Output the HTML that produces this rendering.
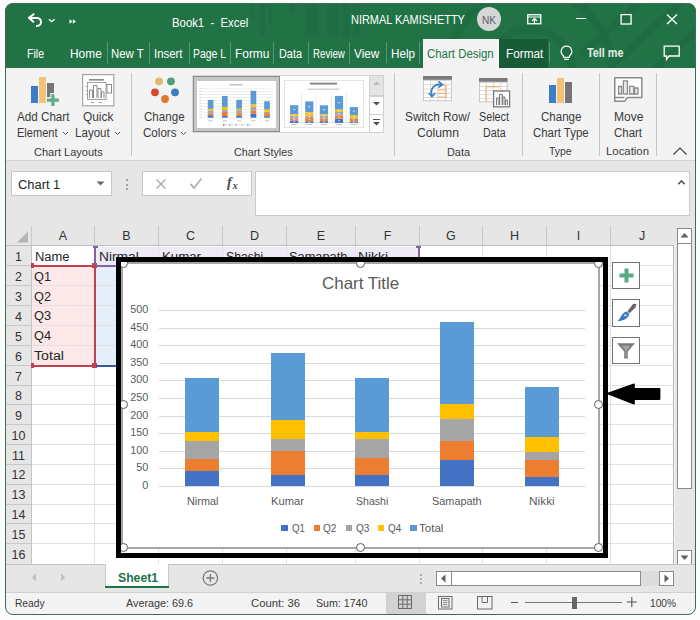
<!DOCTYPE html>
<html><head><meta charset="utf-8"><style>
html,body{margin:0;padding:0;}
body{width:700px;height:620px;position:relative;overflow:hidden;background:#fcfcfc;font-family:"Liberation Sans",sans-serif;}
.r{position:absolute;}
.t{position:absolute;white-space:nowrap;line-height:1;transform-origin:0 0;}
.win{position:absolute;left:5px;top:3px;width:691px;height:612px;border:1px solid #3e6c52;border-radius:8px;box-sizing:border-box;}
</style></head><body>
<div style="position:absolute;left:0;top:0;width:700px;height:620px;clip-path:inset(3px 4px 5px 5px round 8px);">
<div class="r" style="left:5px;top:3px;width:691px;height:612px;background:#f3f3f3;"></div>
<div class="r" style="left:5px;top:3px;width:691px;height:65px;background:#217346;border-radius:8px 8px 0 0;"></div>
<svg class="r" style="left:5px;top:3px;border-radius:8px 8px 0 0;" width="691" height="65" viewBox="0 0 691 65">
<g fill="none" stroke="#1f6c42" stroke-width="8">
<circle cx="525" cy="68" r="42"/>
<circle cx="525" cy="68" r="82"/>
</g>
<g stroke="#1f6c42" stroke-width="7">
<line x1="640" y1="-5" x2="575" y2="52"/><line x1="680" y1="-5" x2="610" y2="60"/>
<line x1="700" y1="20" x2="650" y2="66"/>
</g>
<g fill="#1f6d42"><rect x="246" y="0" width="3" height="17"/><rect x="255.6" y="0" width="4.4" height="32"/><rect x="263" y="0" width="4" height="20"/>
<path d="M283 0 H290 L288 12 Z"/><rect x="300" y="0" width="13" height="32"/><rect x="322" y="0" width="6" height="34"/><rect x="328.5" y="0" width="5" height="34"/>
<rect x="338" y="0" width="7" height="34"/><rect x="348" y="0" width="7" height="34"/></g>
</svg>
<svg class="r" style="left:26px;top:11px;" width="20" height="18" viewBox="0 0 20 18"><path d="M2.5 6.9 H11 A4 4 0 0 1 11 14.9 H10" fill="none" stroke="#fff" stroke-width="2"/><path d="M7.6 3.2 L3 6.9 L7.4 10.7" fill="none" stroke="#fff" stroke-width="2" stroke-linecap="round" stroke-linejoin="round"/></svg>
<svg class="r" style="left:48px;top:17px;" width="8" height="6" viewBox="0 0 8 6"><path d="M0.9 2.3 L3.7 4.6 L6.6 2.3" fill="none" stroke="#fff" stroke-width="1.3"/></svg>
<svg class="r" style="left:69px;top:18px;" width="8" height="7" viewBox="0 0 8 7"><path d="M0.5 1.2 L3.6 3.5 L0.5 5.8 Z M3.9 1.2 L7 3.5 L3.9 5.8 Z" fill="#fff"/></svg>
<div class="t" style="left:172.30px;top:16.00px;font-size:13px;color:#ffffff;font-weight:normal;transform:scaleX(0.8727);">Book1&nbsp; -&nbsp; Excel</div>
<div class="t" style="left:350.80px;top:13.00px;font-size:13px;color:#ffffff;font-weight:normal;transform:scaleX(0.8416);">NIRMAL KAMISHETTY</div>
<div class="r" style="left:476.5px;top:7px;width:24px;height:24px;border-radius:50%;background:#d6d6d6;"></div>
<div class="t" style="left:481.50px;top:15.00px;font-size:11px;color:#5a5a6a;font-weight:normal;transform:scaleX(0.9156);">NK</div>
<svg class="r" style="left:527px;top:14px;" width="15" height="11" viewBox="0 0 15 11"><rect x="0.75" y="0.75" width="13" height="9" fill="none" stroke="#fff" stroke-width="1.3"/><line x1="0.5" y1="3" x2="14" y2="3" stroke="#fff" stroke-width="1.2"/><path d="M5 7 L7.5 4.5 L10 7 M7.5 4.5 V10" fill="none" stroke="#fff" stroke-width="1.2"/></svg>
<div class="r" style="left:575.5px;top:18px;width:10.5px;height:1.2px;background:#fff;"></div>
<svg class="r" style="left:620px;top:13px;" width="13" height="13" viewBox="0 0 13 13"><rect x="1.1" y="1.6" width="10" height="9.4" fill="none" stroke="#fff" stroke-width="1.3"/></svg>
<svg class="r" style="left:666px;top:13px;" width="12" height="12" viewBox="0 0 12 12"><path d="M1 1.5 L11 11 M11 1.5 L1 11" stroke="#fff" stroke-width="1.3"/></svg>
<div class="t" style="left:26.70px;top:48.00px;font-size:12.5px;color:#ffffff;font-weight:normal;transform:scaleX(0.8447);">File</div>
<div class="t" style="left:70.00px;top:48.00px;font-size:12.5px;color:#ffffff;font-weight:normal;transform:scaleX(0.9528);">Home</div>
<div class="t" style="left:111.30px;top:48.00px;font-size:12.5px;color:#ffffff;font-weight:normal;transform:scaleX(0.9115);">New T</div>
<div class="t" style="left:154.30px;top:48.00px;font-size:12.5px;color:#ffffff;font-weight:normal;transform:scaleX(0.9088);">Insert</div>
<div class="t" style="left:193.00px;top:48.00px;font-size:12.5px;color:#ffffff;font-weight:normal;transform:scaleX(0.8328);">Page L</div>
<div class="t" style="left:235.00px;top:48.00px;font-size:12.5px;color:#ffffff;font-weight:normal;transform:scaleX(0.9522);">Formu</div>
<div class="t" style="left:279.00px;top:48.00px;font-size:12.5px;color:#ffffff;font-weight:normal;transform:scaleX(0.8700);">Data</div>
<div class="t" style="left:313.00px;top:48.00px;font-size:12.5px;color:#ffffff;font-weight:normal;transform:scaleX(0.7756);">Review</div>
<div class="t" style="left:354.40px;top:48.00px;font-size:12.5px;color:#ffffff;font-weight:normal;transform:scaleX(0.9451);">View</div>
<div class="t" style="left:391.00px;top:48.00px;font-size:12.5px;color:#ffffff;font-weight:normal;transform:scaleX(0.9343);">Help</div>
<div class="r" style="left:106.7px;top:42.4px;width:1px;height:21.4px;background:#4f9a6e;"></div>
<div class="r" style="left:148.6px;top:42.4px;width:1px;height:21.4px;background:#4f9a6e;"></div>
<div class="r" style="left:188.5px;top:42.4px;width:1px;height:21.4px;background:#4f9a6e;"></div>
<div class="r" style="left:230.4px;top:42.4px;width:1px;height:21.4px;background:#4f9a6e;"></div>
<div class="r" style="left:272.9px;top:42.4px;width:1px;height:21.4px;background:#4f9a6e;"></div>
<div class="r" style="left:308px;top:42.4px;width:1px;height:21.4px;background:#4f9a6e;"></div>
<div class="r" style="left:349.3px;top:42.4px;width:1px;height:21.4px;background:#4f9a6e;"></div>
<div class="r" style="left:386px;top:42.4px;width:1px;height:21.4px;background:#4f9a6e;"></div>
<div class="r" style="left:419px;top:42.4px;width:1px;height:21.4px;background:#4f9a6e;"></div>
<div class="r" style="left:423px;top:38.7px;width:76px;height:30px;background:#f3f3f3;"></div>
<div class="t" style="left:427.00px;top:48.00px;font-size:12.5px;color:#217346;font-weight:normal;transform:scaleX(0.9145);">Chart Design</div>
<div class="r" style="left:499px;top:38.7px;width:49px;height:29.3px;background:#185c37;"></div>
<div class="t" style="left:505.60px;top:48.00px;font-size:12.5px;color:#ffffff;font-weight:normal;transform:scaleX(0.9428);">Format</div>
<div class="r" style="left:548.5px;top:41.6px;width:1px;height:21.4px;background:#4f9a6e;"></div>
<svg class="r" style="left:559px;top:45px;" width="15" height="17" viewBox="0 0 15 17"><path d="M7.5 1.2 A5.2 5.2 0 0 0 4.2 10.5 L4.8 12.3 H10.2 L10.8 10.5 A5.2 5.2 0 0 0 7.5 1.2 Z" fill="none" stroke="#fff" stroke-width="1.2"/><line x1="5.2" y1="14.3" x2="9.8" y2="14.3" stroke="#fff" stroke-width="1.2"/></svg>
<div class="t" style="left:586.50px;top:47.00px;font-size:12.5px;color:#e4ece6;font-weight:bold;transform:scaleX(0.8665);">Tell me</div>
<svg class="r" style="left:663px;top:45px;" width="18" height="17" viewBox="0 0 18 17"><path d="M1.2 1.2 H16.2 V11 H6 L3.5 14.5 V11 H1.2 Z" fill="none" stroke="#fff" stroke-width="1.3"/></svg>
<div class="r" style="left:6px;top:68px;width:689px;height:92px;background:#f3f3f3;"></div>
<div class="r" style="left:6px;top:160px;width:689px;height:1px;background:#d4d4d4;"></div>
<div class="r" style="left:131px;top:72.5px;width:1px;height:83px;background:#c6c6c6;"></div>
<div class="r" style="left:394px;top:72.5px;width:1px;height:83px;background:#c6c6c6;"></div>
<div class="r" style="left:522px;top:72.5px;width:1px;height:83px;background:#c6c6c6;"></div>
<div class="r" style="left:599px;top:72.5px;width:1px;height:83px;background:#c6c6c6;"></div>
<div class="r" style="left:656px;top:72.5px;width:1px;height:83px;background:#c6c6c6;"></div>
<div class="r" style="left:31px;top:85.6px;width:6.5px;height:17.4px;background:#3d7cc9;"></div>
<div class="r" style="left:39px;top:77.3px;width:6.5px;height:25.7px;background:#f2c376;"></div>
<div class="r" style="left:47px;top:82.5px;width:6.6px;height:14px;background:#767676;"></div>
<svg class="r" style="left:45px;top:92px;" width="16" height="16" viewBox="0 0 16 16"><path d="M5.75 1.6 H10.05 V5.95 H14.4 V10.25 H10.05 V14.6 H5.75 V10.25 H1.4 V5.95 H5.75 Z" fill="#62aa8c" stroke="#f3f3f3" stroke-width="1.1"/></svg>
<div class="t" style="left:16.50px;top:111.00px;font-size:12px;color:#3a3a3a;font-weight:normal;transform:scaleX(0.9711);">Add Chart</div>
<div class="t" style="left:16.50px;top:127.00px;font-size:12px;color:#3a3a3a;font-weight:normal;transform:scaleX(0.9196);">Element</div>
<svg class="r" style="left:62px;top:131px;" width="7" height="5" viewBox="0 0 7 5"><path d="M1 1 L3.5 3.5 L6 1" fill="none" stroke="#555" stroke-width="1"/></svg>
<svg class="r" style="left:82px;top:74px;" width="33" height="33" viewBox="0 0 33 33"><rect x="0.6" y="0.6" width="31.2" height="31.2" fill="#fff" stroke="#a6a6a6" stroke-width="1.2"/>
<rect x="7" y="5" width="15" height="1.6" fill="#8a8a8a"/>
<rect x="5.5" y="8.5" width="18.5" height="17" fill="none" stroke="#a0a0a0" stroke-width="1"/>
<g fill="none" stroke="#8a8a8a" stroke-width="1"><path d="M7.5 24 V16 H10.5 V24"/><path d="M11.5 24 V11.5 H15 V24"/><path d="M16 24 V14.5 H19 V24"/><path d="M19.5 24 V18 H22 V24"/></g>
<rect x="25" y="10.5" width="4.5" height="8.5" fill="none" stroke="#8a8a8a" stroke-width="1"/>
<g fill="#a0a0a0"><rect x="3.5" y="12" width="1.3" height="0.9"/><rect x="3.5" y="16" width="1.3" height="0.9"/><rect x="3.5" y="20" width="1.3" height="0.9"/><rect x="9" y="28" width="3" height="1"/><rect x="17" y="28" width="3" height="1"/></g></svg>
<div class="t" style="left:82.60px;top:111.00px;font-size:12px;color:#3a3a3a;font-weight:normal;transform:scaleX(0.9896);">Quick</div>
<div class="t" style="left:75.20px;top:127.00px;font-size:12px;color:#3a3a3a;font-weight:normal;transform:scaleX(0.9651);">Layout</div>
<svg class="r" style="left:113.5px;top:131px;" width="7" height="5" viewBox="0 0 7 5"><path d="M1 1 L3.5 3.5 L6 1" fill="none" stroke="#555" stroke-width="1"/></svg>
<div class="t" style="left:34.30px;top:147.00px;font-size:11.5px;color:#3a3a3a;font-weight:normal;transform:scaleX(0.9597);">Chart Layouts</div>
<svg class="r" style="left:148px;top:73px;" width="34" height="32" viewBox="0 0 34 32"><circle cx="11" cy="8.3" r="3.9" fill="#e9b663"/><circle cx="23" cy="8.3" r="3.9" fill="#4e9e76"/><circle cx="7" cy="19.3" r="3.9" fill="#d44a2a"/><circle cx="27" cy="19.3" r="3.9" fill="#3a7dc4"/><circle cx="17" cy="26" r="3.9" fill="#e3782a"/></svg>
<div class="t" style="left:144.40px;top:111.00px;font-size:12px;color:#3a3a3a;font-weight:normal;transform:scaleX(0.9653);">Change</div>
<div class="t" style="left:142.50px;top:127.00px;font-size:12px;color:#3a3a3a;font-weight:normal;transform:scaleX(0.9660);">Colors</div>
<svg class="r" style="left:180px;top:131px;" width="7" height="5" viewBox="0 0 7 5"><path d="M1 1 L3.5 3.5 L6 1" fill="none" stroke="#555" stroke-width="1"/></svg>
<div class="r" style="left:191.6px;top:75px;width:178px;height:58.4px;background:#fff;border:1px solid #d8d8d8;box-sizing:border-box;"></div>
<div class="r" style="left:193px;top:76.4px;width:87px;height:55.3px;background:#c6c6c6;border:1.5px solid #8c8c8c;box-sizing:border-box;"></div>
<div class="r" style="left:197.3px;top:80.7px;width:78.6px;height:47.2px;background:#fff;"></div>
<svg class="r" style="left:197.3px;top:80.7px;" width="79" height="48" viewBox="0 0 79 48"><rect x="32.5" y="3.1" width="13" height="1.3" fill="#b8b8b8"/><rect x="6" y="7.60" width="70" height="0.55" fill="#e0e0e0"/><rect x="2.3" y="7.20" width="2.6" height="0.9" fill="#cfcfcf"/><rect x="6" y="10.51" width="70" height="0.55" fill="#e0e0e0"/><rect x="2.3" y="10.11" width="2.6" height="0.9" fill="#cfcfcf"/><rect x="6" y="13.42" width="70" height="0.55" fill="#e0e0e0"/><rect x="2.3" y="13.02" width="2.6" height="0.9" fill="#cfcfcf"/><rect x="6" y="16.33" width="70" height="0.55" fill="#e0e0e0"/><rect x="2.3" y="15.93" width="2.6" height="0.9" fill="#cfcfcf"/><rect x="6" y="19.24" width="70" height="0.55" fill="#e0e0e0"/><rect x="2.3" y="18.84" width="2.6" height="0.9" fill="#cfcfcf"/><rect x="6" y="22.15" width="70" height="0.55" fill="#e0e0e0"/><rect x="2.3" y="21.75" width="2.6" height="0.9" fill="#cfcfcf"/><rect x="6" y="25.06" width="70" height="0.55" fill="#e0e0e0"/><rect x="2.3" y="24.66" width="2.6" height="0.9" fill="#cfcfcf"/><rect x="6" y="27.97" width="70" height="0.55" fill="#e0e0e0"/><rect x="2.3" y="27.57" width="2.6" height="0.9" fill="#cfcfcf"/><rect x="6" y="30.88" width="70" height="0.55" fill="#e0e0e0"/><rect x="2.3" y="30.48" width="2.6" height="0.9" fill="#cfcfcf"/><rect x="6" y="33.79" width="70" height="0.55" fill="#e0e0e0"/><rect x="2.3" y="33.39" width="2.6" height="0.9" fill="#cfcfcf"/><rect x="6" y="36.70" width="70" height="0.55" fill="#e0e0e0"/><rect x="2.3" y="36.30" width="2.6" height="0.9" fill="#cfcfcf"/><rect x="10.75" y="34.26" width="5.7" height="2.44" fill="#4472c4"/><rect x="10.75" y="32.29" width="5.7" height="1.97" fill="#ed7d31"/><rect x="10.75" y="29.33" width="5.7" height="2.96" fill="#a5a5a5"/><rect x="10.75" y="27.82" width="5.7" height="1.51" fill="#ffc000"/><rect x="10.75" y="18.93" width="5.7" height="8.88" fill="#5b9bd5"/><rect x="11.40" y="39.3" width="4.4" height="0.9" fill="#c0c0c0"/><rect x="24.95" y="34.90" width="5.7" height="1.80" fill="#4472c4"/><rect x="24.95" y="30.95" width="5.7" height="3.95" fill="#ed7d31"/><rect x="24.95" y="28.98" width="5.7" height="1.97" fill="#a5a5a5"/><rect x="24.95" y="25.84" width="5.7" height="3.14" fill="#ffc000"/><rect x="24.95" y="14.93" width="5.7" height="10.92" fill="#5b9bd5"/><rect x="25.60" y="39.3" width="4.4" height="0.9" fill="#c0c0c0"/><rect x="39.25" y="34.90" width="5.7" height="1.80" fill="#4472c4"/><rect x="39.25" y="32.23" width="5.7" height="2.67" fill="#ed7d31"/><rect x="39.25" y="29.09" width="5.7" height="3.14" fill="#a5a5a5"/><rect x="39.25" y="27.82" width="5.7" height="1.28" fill="#ffc000"/><rect x="39.25" y="18.87" width="5.7" height="8.94" fill="#5b9bd5"/><rect x="39.90" y="39.3" width="4.4" height="0.9" fill="#c0c0c0"/><rect x="53.55" y="32.40" width="5.7" height="4.30" fill="#4472c4"/><rect x="53.55" y="29.38" width="5.7" height="3.02" fill="#ed7d31"/><rect x="53.55" y="25.73" width="5.7" height="3.66" fill="#a5a5a5"/><rect x="53.55" y="23.29" width="5.7" height="2.44" fill="#ffc000"/><rect x="53.55" y="9.76" width="5.7" height="13.53" fill="#5b9bd5"/><rect x="54.20" y="39.3" width="4.4" height="0.9" fill="#c0c0c0"/><rect x="67.15" y="35.13" width="5.7" height="1.57" fill="#4472c4"/><rect x="67.15" y="32.11" width="5.7" height="3.02" fill="#ed7d31"/><rect x="67.15" y="30.78" width="5.7" height="1.34" fill="#a5a5a5"/><rect x="67.15" y="28.40" width="5.7" height="2.38" fill="#ffc000"/><rect x="67.15" y="20.27" width="5.7" height="8.13" fill="#5b9bd5"/><rect x="67.80" y="39.3" width="4.4" height="0.9" fill="#c0c0c0"/><rect x="26.0" y="43.2" width="1.5" height="1.5" fill="#4472c4"/><rect x="28.0" y="43.5" width="2.5" height="0.9" fill="#d0d0d0"/><rect x="32.0" y="43.2" width="1.5" height="1.5" fill="#ed7d31"/><rect x="34.0" y="43.5" width="2.5" height="0.9" fill="#d0d0d0"/><rect x="38.0" y="43.2" width="1.5" height="1.5" fill="#a5a5a5"/><rect x="40.0" y="43.5" width="2.5" height="0.9" fill="#d0d0d0"/><rect x="44.0" y="43.2" width="1.5" height="1.5" fill="#ffc000"/><rect x="46.0" y="43.5" width="2.5" height="0.9" fill="#d0d0d0"/><rect x="50.0" y="43.2" width="1.5" height="1.5" fill="#5b9bd5"/><rect x="52.0" y="43.5" width="2.5" height="0.9" fill="#d0d0d0"/></svg>
<svg class="r" style="left:284.4px;top:80.3px;" width="80" height="48" viewBox="0 0 80 48"><rect x="0.5" y="0.5" width="79" height="47" fill="#fff" stroke="#e4e4e4" stroke-width="1"/><rect x="26" y="2.6" width="27" height="2" fill="#8a8a8a"/><rect x="24" y="8.6" width="31" height="1.2" fill="#c8c8c8"/><rect x="17.2" y="13" width="0.6" height="29.5" fill="#e0e0e0"/><rect x="31.8" y="13" width="0.6" height="29.5" fill="#e0e0e0"/><rect x="47.3" y="13" width="0.6" height="29.5" fill="#e0e0e0"/><rect x="61.9" y="13" width="0.6" height="29.5" fill="#e0e0e0"/><rect x="4" y="42.4" width="72" height="0.6" fill="#d0d0d0"/><rect x="6.10" y="40.56" width="8.2" height="2.44" fill="#4472c4"/><rect x="9.00" y="41.38" width="2.4" height="0.8" fill="#fff" opacity="0.8"/><rect x="6.10" y="38.58" width="8.2" height="1.98" fill="#ed7d31"/><rect x="9.00" y="39.17" width="2.4" height="0.8" fill="#fff" opacity="0.8"/><rect x="6.10" y="35.61" width="8.2" height="2.97" fill="#a5a5a5"/><rect x="9.00" y="36.70" width="2.4" height="0.8" fill="#fff" opacity="0.8"/><rect x="6.10" y="34.10" width="8.2" height="1.51" fill="#ffc000"/><rect x="9.00" y="34.46" width="2.4" height="0.8" fill="#fff" opacity="0.8"/><rect x="6.10" y="25.20" width="8.2" height="8.90" fill="#5b9bd5"/><rect x="9.00" y="29.25" width="2.4" height="0.8" fill="#fff" opacity="0.8"/><rect x="7.20" y="44" width="6" height="1" fill="#c0c0c0"/><rect x="21.20" y="41.21" width="8.2" height="1.79" fill="#4472c4"/><rect x="24.10" y="41.71" width="2.4" height="0.8" fill="#fff" opacity="0.8"/><rect x="21.20" y="37.30" width="8.2" height="3.92" fill="#ed7d31"/><rect x="24.10" y="38.86" width="2.4" height="0.8" fill="#fff" opacity="0.8"/><rect x="21.20" y="35.34" width="8.2" height="1.96" fill="#a5a5a5"/><rect x="24.10" y="35.92" width="2.4" height="0.8" fill="#fff" opacity="0.8"/><rect x="21.20" y="32.23" width="8.2" height="3.11" fill="#ffc000"/><rect x="24.10" y="33.38" width="2.4" height="0.8" fill="#fff" opacity="0.8"/><rect x="21.20" y="21.40" width="8.2" height="10.83" fill="#5b9bd5"/><rect x="24.10" y="26.41" width="2.4" height="0.8" fill="#fff" opacity="0.8"/><rect x="22.30" y="44" width="6" height="1" fill="#c0c0c0"/><rect x="35.80" y="41.21" width="8.2" height="1.79" fill="#4472c4"/><rect x="38.70" y="41.71" width="2.4" height="0.8" fill="#fff" opacity="0.8"/><rect x="35.80" y="38.56" width="8.2" height="2.65" fill="#ed7d31"/><rect x="38.70" y="39.49" width="2.4" height="0.8" fill="#fff" opacity="0.8"/><rect x="35.80" y="35.45" width="8.2" height="3.11" fill="#a5a5a5"/><rect x="38.70" y="36.60" width="2.4" height="0.8" fill="#fff" opacity="0.8"/><rect x="35.80" y="34.18" width="8.2" height="1.27" fill="#ffc000"/><rect x="38.70" y="34.41" width="2.4" height="0.8" fill="#fff" opacity="0.8"/><rect x="35.80" y="25.30" width="8.2" height="8.88" fill="#5b9bd5"/><rect x="38.70" y="29.34" width="2.4" height="0.8" fill="#fff" opacity="0.8"/><rect x="36.90" y="44" width="6" height="1" fill="#c0c0c0"/><rect x="50.90" y="38.68" width="8.2" height="4.32" fill="#4472c4"/><rect x="53.80" y="40.44" width="2.4" height="0.8" fill="#fff" opacity="0.8"/><rect x="50.90" y="35.64" width="8.2" height="3.04" fill="#ed7d31"/><rect x="53.80" y="36.76" width="2.4" height="0.8" fill="#fff" opacity="0.8"/><rect x="50.90" y="31.96" width="8.2" height="3.68" fill="#a5a5a5"/><rect x="53.80" y="33.40" width="2.4" height="0.8" fill="#fff" opacity="0.8"/><rect x="50.90" y="29.51" width="8.2" height="2.45" fill="#ffc000"/><rect x="53.80" y="30.33" width="2.4" height="0.8" fill="#fff" opacity="0.8"/><rect x="50.90" y="15.90" width="8.2" height="13.61" fill="#5b9bd5"/><rect x="53.80" y="22.30" width="2.4" height="0.8" fill="#fff" opacity="0.8"/><rect x="52.00" y="44" width="6" height="1" fill="#c0c0c0"/><rect x="65.80" y="41.48" width="8.2" height="1.52" fill="#4472c4"/><rect x="68.70" y="41.84" width="2.4" height="0.8" fill="#fff" opacity="0.8"/><rect x="65.80" y="38.56" width="8.2" height="2.92" fill="#ed7d31"/><rect x="68.70" y="39.62" width="2.4" height="0.8" fill="#fff" opacity="0.8"/><rect x="65.80" y="37.27" width="8.2" height="1.29" fill="#a5a5a5"/><rect x="68.70" y="37.52" width="2.4" height="0.8" fill="#fff" opacity="0.8"/><rect x="65.80" y="34.97" width="8.2" height="2.30" fill="#ffc000"/><rect x="68.70" y="35.72" width="2.4" height="0.8" fill="#fff" opacity="0.8"/><rect x="65.80" y="27.10" width="8.2" height="7.87" fill="#5b9bd5"/><rect x="68.70" y="30.63" width="2.4" height="0.8" fill="#fff" opacity="0.8"/><rect x="66.90" y="44" width="6" height="1" fill="#c0c0c0"/></svg>
<div class="r" style="left:369.3px;top:75px;width:14.5px;height:21px;background:#e4e4e4;border:1px solid #d0d0d0;box-sizing:border-box;"></div>
<div class="r" style="left:369.3px;top:95.5px;width:14.5px;height:19px;background:#fff;border:1px solid #d0d0d0;box-sizing:border-box;"></div>
<div class="r" style="left:369.3px;top:113.8px;width:14.5px;height:19.6px;background:#fff;border:1px solid #d0d0d0;box-sizing:border-box;"></div>
<svg class="r" style="left:372px;top:80px;" width="9" height="6" viewBox="0 0 9 6"><path d="M1 5 L4.5 1.5 L8 5 Z" fill="#b8b8b8"/></svg>
<svg class="r" style="left:372px;top:101px;" width="9" height="6" viewBox="0 0 9 6"><path d="M1 1 L4.5 4.5 L8 1 Z" fill="#505050"/></svg>
<svg class="r" style="left:372px;top:118px;" width="9" height="10" viewBox="0 0 9 10"><rect x="1" y="1" width="7" height="1" fill="#505050"/><path d="M1 4 L4.5 7.5 L8 4 Z" fill="#505050"/></svg>
<div class="t" style="left:233.50px;top:147.00px;font-size:11.5px;color:#3a3a3a;font-weight:normal;transform:scaleX(0.9342);">Chart Styles</div>
<svg class="r" style="left:422.6px;top:76.4px;" width="29" height="26" viewBox="0 0 29 26"><rect x="0" y="0" width="29" height="4.2" fill="#7a7a7a"/><rect x="0.5" y="4.2" width="28" height="20.5" fill="#fff" stroke="#c8c8c8" stroke-width="1"/><rect x="0" y="8.40" width="29" height="0.8" fill="#d0d0d0"/><rect x="0" y="12.60" width="29" height="0.8" fill="#d0d0d0"/><rect x="0" y="16.80" width="29" height="0.8" fill="#d0d0d0"/><rect x="0" y="21.00" width="29" height="0.8" fill="#d0d0d0"/><rect x="7.25" y="4.2" width="0.8" height="21.0" fill="#d0d0d0"/><rect x="14.50" y="4.2" width="0.8" height="21.0" fill="#d0d0d0"/><rect x="21.75" y="4.2" width="0.8" height="21.0" fill="#d0d0d0"/><path d="M14.5 9 H23 V21 H14.5" fill="none" stroke="#f0b070" stroke-width="1.2"/><path d="M14.5 14 H23 M14.5 17.5 H23" stroke="#f0b070" stroke-width="1"/><path d="M9 19.5 A8 8 0 0 1 18 8.5" fill="none" stroke="#3b7fc4" stroke-width="1.8"/><path d="M15.5 5.5 L19.5 8.5 L15.5 11.5" fill="none" stroke="#3b7fc4" stroke-width="1.6"/><path d="M5.8 17 L9 20.5 L12.2 17" fill="none" stroke="#3b7fc4" stroke-width="1.6"/></svg>
<div class="t" style="left:405.00px;top:111.00px;font-size:12px;color:#3a3a3a;font-weight:normal;transform:scaleX(0.9840);">Switch Row/</div>
<div class="t" style="left:417.00px;top:127.00px;font-size:12px;color:#3a3a3a;font-weight:normal;transform:scaleX(1.0160);">Column</div>
<svg class="r" style="left:479.3px;top:77.5px;" width="32" height="30" viewBox="0 0 32 30"><rect x="0" y="0" width="28.6" height="4.2" fill="#7a7a7a"/><rect x="0.5" y="4.2" width="27.6" height="19.6" fill="#fff" stroke="#c8c8c8" stroke-width="1"/><rect x="0" y="8.22" width="28.6" height="0.8" fill="#d0d0d0"/><rect x="0" y="12.24" width="28.6" height="0.8" fill="#d0d0d0"/><rect x="0" y="16.26" width="28.6" height="0.8" fill="#d0d0d0"/><rect x="0" y="20.28" width="28.6" height="0.8" fill="#d0d0d0"/><rect x="7.15" y="4.2" width="0.8" height="20.1" fill="#d0d0d0"/><rect x="14.30" y="4.2" width="0.8" height="20.1" fill="#d0d0d0"/><rect x="21.45" y="4.2" width="0.8" height="20.1" fill="#d0d0d0"/><path d="M7 8.6 V24 M7 8.6 H21" stroke="#f0b070" stroke-width="1.1" fill="none"/><rect x="14.6" y="13" width="16" height="15.8" fill="#fff" stroke="#7a7a7a" stroke-width="1.3"/><g fill="#e8e8e8" stroke="#7a7a7a" stroke-width="1"><path d="M17.5 27 V20 H20 V27"/><path d="M20.5 27 V16.5 H23.3 V27"/><path d="M23.8 27 V19 H26 V27"/><path d="M26.5 27 V22 H28.5 V27"/></g></svg>
<div class="t" style="left:478.60px;top:111.00px;font-size:12px;color:#3a3a3a;font-weight:normal;transform:scaleX(0.8993);">Select</div>
<div class="t" style="left:483.00px;top:127.00px;font-size:12px;color:#3a3a3a;font-weight:normal;transform:scaleX(0.8905);">Data</div>
<div class="t" style="left:447.00px;top:147.00px;font-size:11.5px;color:#3a3a3a;font-weight:normal;transform:scaleX(0.9456);">Data</div>
<div class="r" style="left:549.1px;top:85.4px;width:6.6px;height:17.3px;background:#3d7cc9;"></div>
<div class="r" style="left:557px;top:77.5px;width:6.9px;height:25.2px;background:#f2c376;"></div>
<div class="r" style="left:565.2px;top:82.2px;width:6.7px;height:20.5px;background:#767676;"></div>
<div class="t" style="left:541.30px;top:111.00px;font-size:12px;color:#3a3a3a;font-weight:normal;transform:scaleX(0.9605);">Change</div>
<div class="t" style="left:533.40px;top:127.00px;font-size:12px;color:#3a3a3a;font-weight:normal;transform:scaleX(0.9504);">Chart Type</div>
<div class="t" style="left:548.80px;top:146.00px;font-size:11.5px;color:#3a3a3a;font-weight:normal;transform:scaleX(0.9056);">Type</div>
<svg class="r" style="left:614.2px;top:77px;" width="30" height="26" viewBox="0 0 30 26"><path d="M0.75 0.75 H27.8 V20.6 H13.2 L10.9 24.2 H0.75 Z M0.75 20.6 H10.5" fill="#fff" stroke="#8a8a8a" stroke-width="1.5" stroke-linejoin="round"/><g fill="#ececec" stroke="#8a8a8a" stroke-width="1.3"><path d="M4.6 17 V9.5 H7.6 V17 Z"/><path d="M9.4 17 V3.8 H13.4 V17 Z"/><path d="M15.6 17 V9.3 H19.8 V17 Z"/><path d="M20.6 17 V11 H24 V17 Z"/></g></svg>
<div class="t" style="left:613.90px;top:111.00px;font-size:12px;color:#3a3a3a;font-weight:normal;transform:scaleX(1.0055);">Move</div>
<div class="t" style="left:614.00px;top:127.00px;font-size:12px;color:#3a3a3a;font-weight:normal;transform:scaleX(0.9543);">Chart</div>
<div class="t" style="left:605.60px;top:146.00px;font-size:11.5px;color:#3a3a3a;font-weight:normal;transform:scaleX(0.9892);">Location</div>
<svg class="r" style="left:672px;top:146px;" width="16" height="10" viewBox="0 0 16 10"><path d="M1.5 8.5 L8 2 L14.5 8.5" fill="none" stroke="#444" stroke-width="1.2"/></svg>
<div class="r" style="left:6px;top:161px;width:689px;height:85px;background:#e6e6e6;"></div>
<div class="r" style="left:11px;top:171px;width:101px;height:25px;background:#fff;border:1px solid #c6c6c6;box-sizing:border-box;"></div>
<div class="t" style="left:18.00px;top:178.00px;font-size:13px;color:#262626;font-weight:normal;transform:scaleX(0.9920);">Chart 1</div>
<svg class="r" style="left:96px;top:181px;" width="9" height="5" viewBox="0 0 9 5"><path d="M0.5 0.5 H8.5 L4.5 4.5 Z" fill="#666"/></svg>
<div class="r" style="left:126px;top:179.3px;width:2px;height:2px;background:#8a8a8a;border-radius:50%;"></div>
<div class="r" style="left:126px;top:183.5px;width:2px;height:2px;background:#8a8a8a;border-radius:50%;"></div>
<div class="r" style="left:126px;top:187.7px;width:2px;height:2px;background:#8a8a8a;border-radius:50%;"></div>
<div class="r" style="left:142px;top:171px;width:110px;height:25px;background:#fff;border:1px solid #c6c6c6;box-sizing:border-box;"></div>
<svg class="r" style="left:155px;top:178px;" width="12" height="12" viewBox="0 0 12 12"><path d="M1.5 1.5 L10.5 10.5 M10.5 1.5 L1.5 10.5" stroke="#b0b0b0" stroke-width="1.5"/></svg>
<svg class="r" style="left:189px;top:177px;" width="14" height="13" viewBox="0 0 14 13"><path d="M1.5 7 L5 11 L12.5 1.5" fill="none" stroke="#b4b4b4" stroke-width="1.9"/></svg>
<div class="t" style="left:227px;top:176px;font-size:14px;color:#4a4a4a;font-family:'Liberation Serif',serif;font-style:italic;font-weight:bold;">f</div>
<div class="t" style="left:232.5px;top:181px;font-size:10.5px;color:#4a4a4a;font-family:'Liberation Serif',serif;font-style:italic;font-weight:bold;">x</div>
<div class="r" style="left:255px;top:171px;width:435px;height:45px;background:#fff;border:1px solid #cacaca;box-sizing:border-box;"></div>
<svg class="r" style="left:677px;top:179px;" width="9" height="7" viewBox="0 0 9 7"><path d="M1.2 5.3 L4.5 2 L7.8 5.3" fill="none" stroke="#555" stroke-width="1.6"/></svg>
<div class="r" style="left:6px;top:245px;width:668px;height:319.5px;background:#fff;"></div>
<div class="r" style="left:6px;top:245.7px;width:25px;height:318.5px;background:#e6e6e6;"></div>
<div class="r" style="left:31px;top:226px;width:1px;height:19.7px;background:#c8c8c8;"></div>
<div class="r" style="left:94px;top:226px;width:1px;height:19.7px;background:#c8c8c8;"></div>
<div class="r" style="left:158px;top:226px;width:1px;height:19.7px;background:#c8c8c8;"></div>
<div class="r" style="left:222px;top:226px;width:1px;height:19.7px;background:#c8c8c8;"></div>
<div class="r" style="left:286px;top:226px;width:1px;height:19.7px;background:#c8c8c8;"></div>
<div class="r" style="left:355px;top:226px;width:1px;height:19.7px;background:#c8c8c8;"></div>
<div class="r" style="left:419px;top:226px;width:1px;height:19.7px;background:#c8c8c8;"></div>
<div class="r" style="left:482px;top:226px;width:1px;height:19.7px;background:#c8c8c8;"></div>
<div class="r" style="left:546px;top:226px;width:1px;height:19.7px;background:#c8c8c8;"></div>
<div class="r" style="left:610px;top:226px;width:1px;height:19.7px;background:#c8c8c8;"></div>
<div class="r" style="left:6px;top:245px;width:668px;height:1.2px;background:#bdbdbd;"></div>
<svg class="r" style="left:16px;top:231px;" width="13" height="12" viewBox="0 0 13 12"><path d="M12 0.5 V11.5 H1 Z" fill="#b4b4b4"/></svg>
<div class="t" style="left:58.81px;top:230.00px;font-size:12.5px;color:#333333;font-weight:normal;">A</div>
<div class="t" style="left:122.34px;top:230.00px;font-size:12.5px;color:#333333;font-weight:normal;">B</div>
<div class="t" style="left:186.00px;top:230.00px;font-size:12.5px;color:#333333;font-weight:normal;">C</div>
<div class="t" style="left:250.00px;top:230.00px;font-size:12.5px;color:#333333;font-weight:normal;">D</div>
<div class="t" style="left:316.84px;top:230.00px;font-size:12.5px;color:#333333;font-weight:normal;">E</div>
<div class="t" style="left:383.69px;top:230.00px;font-size:12.5px;color:#333333;font-weight:normal;">F</div>
<div class="t" style="left:446.12px;top:230.00px;font-size:12.5px;color:#333333;font-weight:normal;">G</div>
<div class="t" style="left:510.00px;top:230.00px;font-size:12.5px;color:#333333;font-weight:normal;">H</div>
<div class="t" style="left:576.75px;top:230.00px;font-size:12.5px;color:#333333;font-weight:normal;">I</div>
<div class="t" style="left:638.88px;top:230.00px;font-size:12.5px;color:#333333;font-weight:normal;">J</div>
<div class="r" style="left:31px;top:265.3px;width:643px;height:1px;background:#e1e1e1;"></div>
<div class="r" style="left:6px;top:265.3px;width:25px;height:1px;background:#c8c8c8;"></div>
<div class="r" style="left:31px;top:285.0px;width:643px;height:1px;background:#e1e1e1;"></div>
<div class="r" style="left:6px;top:285.0px;width:25px;height:1px;background:#c8c8c8;"></div>
<div class="r" style="left:31px;top:304.8px;width:643px;height:1px;background:#e1e1e1;"></div>
<div class="r" style="left:6px;top:304.8px;width:25px;height:1px;background:#c8c8c8;"></div>
<div class="r" style="left:31px;top:324.9px;width:643px;height:1px;background:#e1e1e1;"></div>
<div class="r" style="left:6px;top:324.9px;width:25px;height:1px;background:#c8c8c8;"></div>
<div class="r" style="left:31px;top:344.9px;width:643px;height:1px;background:#e1e1e1;"></div>
<div class="r" style="left:6px;top:344.9px;width:25px;height:1px;background:#c8c8c8;"></div>
<div class="r" style="left:31px;top:364.8px;width:643px;height:1px;background:#e1e1e1;"></div>
<div class="r" style="left:6px;top:364.8px;width:25px;height:1px;background:#c8c8c8;"></div>
<div class="r" style="left:31px;top:384.5px;width:643px;height:1px;background:#e1e1e1;"></div>
<div class="r" style="left:6px;top:384.5px;width:25px;height:1px;background:#c8c8c8;"></div>
<div class="r" style="left:31px;top:404.0px;width:643px;height:1px;background:#e1e1e1;"></div>
<div class="r" style="left:6px;top:404.0px;width:25px;height:1px;background:#c8c8c8;"></div>
<div class="r" style="left:31px;top:423.9px;width:643px;height:1px;background:#e1e1e1;"></div>
<div class="r" style="left:6px;top:423.9px;width:25px;height:1px;background:#c8c8c8;"></div>
<div class="r" style="left:31px;top:443.8px;width:643px;height:1px;background:#e1e1e1;"></div>
<div class="r" style="left:6px;top:443.8px;width:25px;height:1px;background:#c8c8c8;"></div>
<div class="r" style="left:31px;top:463.5px;width:643px;height:1px;background:#e1e1e1;"></div>
<div class="r" style="left:6px;top:463.5px;width:25px;height:1px;background:#c8c8c8;"></div>
<div class="r" style="left:31px;top:483.5px;width:643px;height:1px;background:#e1e1e1;"></div>
<div class="r" style="left:6px;top:483.5px;width:25px;height:1px;background:#c8c8c8;"></div>
<div class="r" style="left:31px;top:503.5px;width:643px;height:1px;background:#e1e1e1;"></div>
<div class="r" style="left:6px;top:503.5px;width:25px;height:1px;background:#c8c8c8;"></div>
<div class="r" style="left:31px;top:523.3px;width:643px;height:1px;background:#e1e1e1;"></div>
<div class="r" style="left:6px;top:523.3px;width:25px;height:1px;background:#c8c8c8;"></div>
<div class="r" style="left:31px;top:543.0px;width:643px;height:1px;background:#e1e1e1;"></div>
<div class="r" style="left:6px;top:543.0px;width:25px;height:1px;background:#c8c8c8;"></div>
<div class="r" style="left:94px;top:246px;width:1px;height:318px;background:#e1e1e1;"></div>
<div class="r" style="left:158px;top:246px;width:1px;height:318px;background:#e1e1e1;"></div>
<div class="r" style="left:222px;top:246px;width:1px;height:318px;background:#e1e1e1;"></div>
<div class="r" style="left:286px;top:246px;width:1px;height:318px;background:#e1e1e1;"></div>
<div class="r" style="left:355px;top:246px;width:1px;height:318px;background:#e1e1e1;"></div>
<div class="r" style="left:419px;top:246px;width:1px;height:318px;background:#e1e1e1;"></div>
<div class="r" style="left:482px;top:246px;width:1px;height:318px;background:#e1e1e1;"></div>
<div class="r" style="left:546px;top:246px;width:1px;height:318px;background:#e1e1e1;"></div>
<div class="r" style="left:610px;top:246px;width:1px;height:318px;background:#e1e1e1;"></div>
<div class="r" style="left:673px;top:246px;width:1px;height:318px;background:#e1e1e1;"></div>
<div class="r" style="left:31px;top:245.7px;width:1px;height:318.5px;background:#c4c4c4;"></div>
<div class="r" style="left:673.3px;top:245px;width:1px;height:319px;background:#b8b8b8;"></div>
<div class="t" style="left:15.03px;top:251.00px;font-size:12.5px;color:#333333;font-weight:normal;">1</div>
<div class="t" style="left:15.03px;top:271.00px;font-size:12.5px;color:#333333;font-weight:normal;">2</div>
<div class="t" style="left:15.03px;top:291.00px;font-size:12.5px;color:#333333;font-weight:normal;">3</div>
<div class="t" style="left:15.03px;top:311.00px;font-size:12.5px;color:#333333;font-weight:normal;">4</div>
<div class="t" style="left:15.03px;top:331.00px;font-size:12.5px;color:#333333;font-weight:normal;">5</div>
<div class="t" style="left:15.03px;top:351.00px;font-size:12.5px;color:#333333;font-weight:normal;">6</div>
<div class="t" style="left:15.03px;top:371.00px;font-size:12.5px;color:#333333;font-weight:normal;">7</div>
<div class="t" style="left:15.03px;top:390.00px;font-size:12.5px;color:#333333;font-weight:normal;">8</div>
<div class="t" style="left:15.03px;top:410.00px;font-size:12.5px;color:#333333;font-weight:normal;">9</div>
<div class="t" style="left:11.56px;top:430.00px;font-size:12.5px;color:#333333;font-weight:normal;">10</div>
<div class="t" style="left:12.00px;top:450.00px;font-size:12.5px;color:#333333;font-weight:normal;">11</div>
<div class="t" style="left:11.56px;top:469.00px;font-size:12.5px;color:#333333;font-weight:normal;">12</div>
<div class="t" style="left:11.56px;top:489.00px;font-size:12.5px;color:#333333;font-weight:normal;">13</div>
<div class="t" style="left:11.56px;top:509.00px;font-size:12.5px;color:#333333;font-weight:normal;">14</div>
<div class="t" style="left:11.56px;top:529.00px;font-size:12.5px;color:#333333;font-weight:normal;">15</div>
<div class="t" style="left:11.56px;top:549.00px;font-size:12.5px;color:#333333;font-weight:normal;">16</div>
<div class="r" style="left:32px;top:266px;width:63px;height:99.5px;background:#fce8e8;"></div>
<div class="r" style="left:96px;top:246.5px;width:323px;height:19.5px;background:#efebf6;"></div>
<div class="r" style="left:96px;top:266px;width:323px;height:99.5px;background:#e6eef9;"></div>
<div class="r" style="left:31px;top:285.0px;width:388px;height:1px;background:#d8d8e0;opacity:0.6;"></div>
<div class="r" style="left:31px;top:304.8px;width:388px;height:1px;background:#d8d8e0;opacity:0.6;"></div>
<div class="r" style="left:31px;top:324.9px;width:388px;height:1px;background:#d8d8e0;opacity:0.6;"></div>
<div class="r" style="left:31px;top:344.9px;width:388px;height:1px;background:#d8d8e0;opacity:0.6;"></div>
<div class="r" style="left:158px;top:246px;width:1px;height:119.5px;background:#d8d8e0;opacity:0.6;"></div>
<div class="r" style="left:222px;top:246px;width:1px;height:119.5px;background:#d8d8e0;opacity:0.6;"></div>
<div class="r" style="left:286px;top:246px;width:1px;height:119.5px;background:#d8d8e0;opacity:0.6;"></div>
<div class="r" style="left:355px;top:246px;width:1px;height:119.5px;background:#d8d8e0;opacity:0.6;"></div>
<div class="t" style="left:34.70px;top:251.00px;font-size:12.5px;color:#262626;font-weight:normal;transform:scaleX(1.0367);">Name</div>
<div class="t" style="left:34.20px;top:271.00px;font-size:12.5px;color:#262626;font-weight:normal;transform:scaleX(1.0200);">Q1</div>
<div class="t" style="left:34.20px;top:291.00px;font-size:12.5px;color:#262626;font-weight:normal;transform:scaleX(1.0200);">Q2</div>
<div class="t" style="left:34.20px;top:310.00px;font-size:12.5px;color:#262626;font-weight:normal;transform:scaleX(1.0200);">Q3</div>
<div class="t" style="left:34.20px;top:330.00px;font-size:12.5px;color:#262626;font-weight:normal;transform:scaleX(1.0200);">Q4</div>
<div class="t" style="left:34.20px;top:350.00px;font-size:12.5px;color:#262626;font-weight:normal;transform:scaleX(1.1374);">Total</div>
<div class="t" style="left:98.70px;top:251.00px;font-size:12.5px;color:#262626;font-weight:normal;transform:scaleX(1.1017);">Nirmal</div>
<div class="t" style="left:162.00px;top:251.00px;font-size:12.5px;color:#262626;font-weight:normal;transform:scaleX(1.0594);">Kumar</div>
<div class="t" style="left:225.70px;top:251.00px;font-size:12.5px;color:#262626;font-weight:normal;transform:scaleX(0.9752);">Shashi</div>
<div class="t" style="left:288.60px;top:251.00px;font-size:12.5px;color:#262626;font-weight:normal;transform:scaleX(1.0246);">Samapath</div>
<div class="t" style="left:358.00px;top:251.00px;font-size:12.5px;color:#262626;font-weight:normal;transform:scaleX(1.1085);">Nikki</div>
<div class="r" style="left:94.3px;top:264.8px;width:2px;height:101px;background:#c0424e;"></div>
<div class="r" style="left:32px;top:264.8px;width:63px;height:2px;background:#c0424e;"></div>
<div class="r" style="left:32px;top:364.8px;width:63px;height:2px;background:#c0424e;"></div>
<div class="r" style="left:92.1px;top:263px;width:5.2px;height:5px;background:#c0424e;"></div>
<div class="r" style="left:92.1px;top:363px;width:5.2px;height:5px;background:#c0424e;"></div>
<div class="r" style="left:31px;top:263px;width:2.5px;height:5px;background:#c0424e;"></div>
<div class="r" style="left:31px;top:363px;width:2.5px;height:5px;background:#c0424e;"></div>
<div class="r" style="left:96px;top:264.8px;width:323px;height:2px;background:#8064a2;"></div>
<div class="r" style="left:94.3px;top:246px;width:2px;height:19px;background:#8064a2;"></div>
<div class="r" style="left:417.5px;top:246px;width:2px;height:20px;background:#8064a2;"></div>
<div class="r" style="left:93px;top:245.5px;width:5px;height:2.5px;background:#8064a2;"></div>
<div class="r" style="left:416px;top:245.5px;width:5px;height:2.5px;background:#8064a2;"></div>
<div class="r" style="left:96px;top:364.8px;width:323px;height:2px;background:#3b5a9a;"></div>
<div class="r" style="left:121px;top:262px;width:479px;height:287px;background:#fff;border:2px solid #a6a6a6;box-sizing:border-box;"></div>
<div class="t" style="left:321.90px;top:275.00px;font-size:16.5px;color:#595959;font-weight:normal;transform:scaleX(1.0272);">Chart Title</div>
<div class="r" style="left:159px;top:486px;width:425.5px;height:1px;background:#d9d9d9;"></div>
<div class="t" style="left:142.31px;top:480.00px;font-size:10.8px;color:#595959;font-weight:normal;">0</div>
<div class="r" style="left:159px;top:468px;width:425.5px;height:1px;background:#d9d9d9;"></div>
<div class="t" style="left:136.31px;top:462.00px;font-size:10.8px;color:#595959;font-weight:normal;">50</div>
<div class="r" style="left:159px;top:451px;width:425.5px;height:1px;background:#d9d9d9;"></div>
<div class="t" style="left:130.26px;top:445.00px;font-size:10.8px;color:#595959;font-weight:normal;">100</div>
<div class="r" style="left:159px;top:433px;width:425.5px;height:1px;background:#d9d9d9;"></div>
<div class="t" style="left:130.26px;top:427.00px;font-size:10.8px;color:#595959;font-weight:normal;">150</div>
<div class="r" style="left:159px;top:416px;width:425.5px;height:1px;background:#d9d9d9;"></div>
<div class="t" style="left:130.26px;top:410.00px;font-size:10.8px;color:#595959;font-weight:normal;">200</div>
<div class="r" style="left:159px;top:398px;width:425.5px;height:1px;background:#d9d9d9;"></div>
<div class="t" style="left:130.26px;top:392.00px;font-size:10.8px;color:#595959;font-weight:normal;">250</div>
<div class="r" style="left:159px;top:380px;width:425.5px;height:1px;background:#d9d9d9;"></div>
<div class="t" style="left:130.26px;top:374.00px;font-size:10.8px;color:#595959;font-weight:normal;">300</div>
<div class="r" style="left:159px;top:363px;width:425.5px;height:1px;background:#d9d9d9;"></div>
<div class="t" style="left:130.26px;top:357.00px;font-size:10.8px;color:#595959;font-weight:normal;">350</div>
<div class="r" style="left:159px;top:345px;width:425.5px;height:1px;background:#d9d9d9;"></div>
<div class="t" style="left:130.26px;top:339.00px;font-size:10.8px;color:#595959;font-weight:normal;">400</div>
<div class="r" style="left:159px;top:328px;width:425.5px;height:1px;background:#d9d9d9;"></div>
<div class="t" style="left:130.26px;top:322.00px;font-size:10.8px;color:#595959;font-weight:normal;">450</div>
<div class="r" style="left:159px;top:310px;width:425.5px;height:1px;background:#d9d9d9;"></div>
<div class="t" style="left:130.26px;top:304.00px;font-size:10.8px;color:#595959;font-weight:normal;">500</div>
<div class="r" style="left:185px;top:471px;width:34px;height:15px;background:#4472c4;"></div>
<div class="r" style="left:185px;top:459px;width:34px;height:12px;background:#ed7d31;"></div>
<div class="r" style="left:185px;top:441px;width:34px;height:18px;background:#a5a5a5;"></div>
<div class="r" style="left:185px;top:432px;width:34px;height:9px;background:#ffc000;"></div>
<div class="r" style="left:185px;top:378px;width:34px;height:54px;background:#5b9bd5;"></div>
<div class="r" style="left:271px;top:475px;width:34px;height:11px;background:#4472c4;"></div>
<div class="r" style="left:271px;top:451px;width:34px;height:24px;background:#ed7d31;"></div>
<div class="r" style="left:271px;top:439px;width:34px;height:12px;background:#a5a5a5;"></div>
<div class="r" style="left:271px;top:420px;width:34px;height:19px;background:#ffc000;"></div>
<div class="r" style="left:271px;top:353px;width:34px;height:67px;background:#5b9bd5;"></div>
<div class="r" style="left:355px;top:475px;width:34px;height:11px;background:#4472c4;"></div>
<div class="r" style="left:355px;top:458px;width:34px;height:17px;background:#ed7d31;"></div>
<div class="r" style="left:355px;top:439px;width:34px;height:19px;background:#a5a5a5;"></div>
<div class="r" style="left:355px;top:432px;width:34px;height:7px;background:#ffc000;"></div>
<div class="r" style="left:355px;top:378px;width:34px;height:54px;background:#5b9bd5;"></div>
<div class="r" style="left:440px;top:460px;width:34px;height:26px;background:#4472c4;"></div>
<div class="r" style="left:440px;top:441px;width:34px;height:19px;background:#ed7d31;"></div>
<div class="r" style="left:440px;top:419px;width:34px;height:22px;background:#a5a5a5;"></div>
<div class="r" style="left:440px;top:404px;width:34px;height:15px;background:#ffc000;"></div>
<div class="r" style="left:440px;top:322px;width:34px;height:82px;background:#5b9bd5;"></div>
<div class="r" style="left:525px;top:477px;width:34px;height:9px;background:#4472c4;"></div>
<div class="r" style="left:525px;top:460px;width:34px;height:17px;background:#ed7d31;"></div>
<div class="r" style="left:525px;top:452px;width:34px;height:8px;background:#a5a5a5;"></div>
<div class="r" style="left:525px;top:437px;width:34px;height:15px;background:#ffc000;"></div>
<div class="r" style="left:525px;top:387px;width:34px;height:50px;background:#5b9bd5;"></div>
<div class="t" style="left:186.50px;top:496.00px;font-size:10.8px;color:#595959;font-weight:normal;transform:scaleX(1.0092);">Nirmal</div>
<div class="t" style="left:271.00px;top:496.00px;font-size:10.8px;color:#595959;font-weight:normal;transform:scaleX(1.0375);">Kumar</div>
<div class="t" style="left:355.70px;top:496.00px;font-size:10.8px;color:#595959;font-weight:normal;transform:scaleX(0.9774);">Shashi</div>
<div class="t" style="left:431.70px;top:496.00px;font-size:10.8px;color:#595959;font-weight:normal;transform:scaleX(1.0092);">Samapath</div>
<div class="t" style="left:528.90px;top:496.00px;font-size:10.8px;color:#595959;font-weight:normal;transform:scaleX(1.0991);">Nikki</div>
<div class="r" style="left:281.4px;top:524.6px;width:6.3px;height:6.5px;background:#4472c4;"></div>
<div class="t" style="left:291.70px;top:523.00px;font-size:11.2px;color:#595959;font-weight:normal;transform:scaleX(0.8694);">Q1</div>
<div class="r" style="left:314px;top:524.6px;width:6.3px;height:6.5px;background:#ed7d31;"></div>
<div class="t" style="left:323.00px;top:523.00px;font-size:11.2px;color:#595959;font-weight:normal;transform:scaleX(0.9029);">Q2</div>
<div class="r" style="left:346px;top:524.6px;width:6.3px;height:6.5px;background:#a5a5a5;"></div>
<div class="t" style="left:355.50px;top:523.00px;font-size:11.2px;color:#595959;font-weight:normal;transform:scaleX(0.9029);">Q3</div>
<div class="r" style="left:378px;top:524.6px;width:6.3px;height:6.5px;background:#ffc000;"></div>
<div class="t" style="left:387.50px;top:523.00px;font-size:11.2px;color:#595959;font-weight:normal;transform:scaleX(0.8895);">Q4</div>
<div class="r" style="left:410.3px;top:524.6px;width:6.3px;height:6.5px;background:#5b9bd5;"></div>
<div class="t" style="left:419.30px;top:523.00px;font-size:11.2px;color:#595959;font-weight:normal;transform:scaleX(1.0325);">Total</div>
<div class="r" style="left:119.0px;top:258.5px;width:9px;height:9px;border-radius:50%;background:#fff;border:1.4px solid #5c5c5c;box-sizing:border-box;"></div>
<div class="r" style="left:119.0px;top:400.0px;width:9px;height:9px;border-radius:50%;background:#fff;border:1.4px solid #5c5c5c;box-sizing:border-box;"></div>
<div class="r" style="left:119.0px;top:543.0px;width:9px;height:9px;border-radius:50%;background:#fff;border:1.4px solid #5c5c5c;box-sizing:border-box;"></div>
<div class="r" style="left:356.0px;top:258.5px;width:9px;height:9px;border-radius:50%;background:#fff;border:1.4px solid #5c5c5c;box-sizing:border-box;"></div>
<div class="r" style="left:356.0px;top:543.0px;width:9px;height:9px;border-radius:50%;background:#fff;border:1.4px solid #5c5c5c;box-sizing:border-box;"></div>
<div class="r" style="left:594.0px;top:258.5px;width:9px;height:9px;border-radius:50%;background:#fff;border:1.4px solid #5c5c5c;box-sizing:border-box;"></div>
<div class="r" style="left:594.0px;top:400.0px;width:9px;height:9px;border-radius:50%;background:#fff;border:1.4px solid #5c5c5c;box-sizing:border-box;"></div>
<div class="r" style="left:594.0px;top:543.0px;width:9px;height:9px;border-radius:50%;background:#fff;border:1.4px solid #5c5c5c;box-sizing:border-box;"></div>
<div class="r" style="left:116px;top:257px;width:491.5px;height:301px;border:5px solid #000;box-sizing:border-box;"></div>
<div class="r" style="left:612.4px;top:261.5px;width:27.6px;height:27.2px;background:#fff;border:1.5px solid #737373;box-sizing:border-box;"></div>
<div class="r" style="left:612.4px;top:299.4px;width:27.6px;height:27.2px;background:#fff;border:1.5px solid #737373;box-sizing:border-box;"></div>
<div class="r" style="left:612.4px;top:337px;width:27.6px;height:27.2px;background:#fff;border:1.5px solid #737373;box-sizing:border-box;"></div>
<svg class="r" style="left:619px;top:268px;" width="15" height="15" viewBox="0 0 15 15"><path d="M5.5 0.5 H9.5 V5.5 H14.5 V9.5 H9.5 V14.5 H5.5 V9.5 H0.5 V5.5 H5.5 Z" fill="#5aa886"/></svg>
<svg class="r" style="left:616px;top:302px;" width="22" height="21" viewBox="0 0 22 21"><path d="M17.2 1.8 L20.5 2.2 L19.5 5.5 L13.5 11.3 L11.5 9.3 Z" fill="#666"/><path d="M11 9.6 L13.3 11.9 C12.5 16 8 18.8 1.5 19.3 C3.5 17.5 4.5 14.5 6.5 12.3 C7.8 10.8 9.4 9.8 11 9.6 Z" fill="#3a78c0"/><path d="M7.5 13.5 C8.5 12.5 10 12 11 12.8 C10.5 14 9 14.8 7.5 13.5 Z" fill="#dde8f4"/></svg>
<svg class="r" style="left:616px;top:342px;" width="20" height="18" viewBox="0 0 20 18"><path d="M1 1.2 H19 L11.8 9.5 V16.5 H8.2 V9.5 Z" fill="#7a7a7a"/><path d="M5.5 3.8 H14.5 L10.5 8.6 V15 H9.5 V8.6 Z" fill="#a6a6a6"/></svg>
<svg class="r" style="left:605px;top:380px;" width="58" height="27" viewBox="0 0 58 27"><path d="M2.8 13.5 L29 4.2 L29 8.9 L54.6 8.9 L54.6 19.1 L29 19.1 L29 23.8 Z" fill="#000" stroke="#000" stroke-width="1.6" stroke-linejoin="round"/></svg>
<div class="r" style="left:674.5px;top:226px;width:21px;height:338.5px;background:#e6e6e6;"></div>
<div class="r" style="left:677.4px;top:228.4px;width:14.2px;height:15.5px;background:#fff;border:1.4px solid #8a8a8a;box-sizing:border-box;"></div>
<svg class="r" style="left:680px;top:232px;" width="9" height="6" viewBox="0 0 9 6"><path d="M0.5 5.5 L4.5 1 L8.5 5.5 Z" fill="#606060"/></svg>
<div class="r" style="left:677.4px;top:243px;width:14.2px;height:246px;background:#fff;border:1.4px solid #8a8a8a;box-sizing:border-box;"></div>
<div class="r" style="left:677.4px;top:550.4px;width:14.2px;height:14.6px;background:#fff;border:1.4px solid #8a8a8a;box-sizing:border-box;"></div>
<svg class="r" style="left:680px;top:555px;" width="9" height="6" viewBox="0 0 9 6"><path d="M0.5 0.5 L4.5 5 L8.5 0.5 Z" fill="#606060"/></svg>
<div class="r" style="left:6px;top:564px;width:689px;height:28px;background:#e6e6e6;"></div>
<div class="r" style="left:6px;top:563.8px;width:689px;height:1px;background:#c4c4c4;"></div>
<svg class="r" style="left:31px;top:573px;" width="6" height="9" viewBox="0 0 6 9"><path d="M5 0.5 V8.5 L0.8 4.5 Z" fill="#c0c0c0"/></svg>
<svg class="r" style="left:60px;top:573px;" width="6" height="9" viewBox="0 0 6 9"><path d="M1 0.5 V8.5 L5.2 4.5 Z" fill="#c0c0c0"/></svg>
<div class="r" style="left:105.2px;top:564px;width:64px;height:24px;background:#fff;border-left:1px solid #c8c8c8;border-right:1px solid #c8c8c8;box-sizing:border-box;"></div>
<div class="r" style="left:105.2px;top:586px;width:64px;height:2.2px;background:#217346;"></div>
<div class="t" style="left:117.70px;top:572.00px;font-size:12.5px;color:#217346;font-weight:bold;transform:scaleX(0.9780);">Sheet1</div>
<svg class="r" style="left:202px;top:570px;" width="17" height="17" viewBox="0 0 17 17"><circle cx="8.4" cy="8" r="7.2" fill="none" stroke="#777" stroke-width="1.2"/><path d="M8.4 4 V12 M4.4 8 H12.4" stroke="#777" stroke-width="1.3"/></svg>
<div class="r" style="left:419.5px;top:573.5px;width:2px;height:2px;background:#9a9a9a;border-radius:50%;"></div>
<div class="r" style="left:419.5px;top:577.5px;width:2px;height:2px;background:#9a9a9a;border-radius:50%;"></div>
<div class="r" style="left:419.5px;top:581.5px;width:2px;height:2px;background:#9a9a9a;border-radius:50%;"></div>
<div class="r" style="left:436px;top:571.2px;width:238px;height:14.8px;background:#dcdcdc;"></div>
<div class="r" style="left:436px;top:571.2px;width:15.5px;height:14.8px;background:#fff;border:1.3px solid #8a8a8a;box-sizing:border-box;"></div>
<svg class="r" style="left:440px;top:574px;" width="7" height="9" viewBox="0 0 7 9"><path d="M5.5 0.5 V8.5 L1 4.5 Z" fill="#606060"/></svg>
<div class="r" style="left:450.5px;top:571.2px;width:190px;height:14.8px;background:#fff;border:1.3px solid #8a8a8a;box-sizing:border-box;"></div>
<div class="r" style="left:658.8px;top:571.2px;width:15.2px;height:14.8px;background:#fff;border:1.3px solid #8a8a8a;box-sizing:border-box;"></div>
<svg class="r" style="left:663px;top:574px;" width="7" height="9" viewBox="0 0 7 9"><path d="M1.5 0.5 V8.5 L6 4.5 Z" fill="#606060"/></svg>
<div class="r" style="left:6px;top:592px;width:689px;height:22.5px;background:#f3f3f3;"></div>
<div class="r" style="left:6px;top:591.6px;width:689px;height:1px;background:#d0d0d0;"></div>
<div class="t" style="left:14.90px;top:598.00px;font-size:11.5px;color:#3a3a3a;font-weight:normal;transform:scaleX(0.8876);">Ready</div>
<div class="t" style="left:126.00px;top:598.00px;font-size:11.5px;color:#3a3a3a;font-weight:normal;transform:scaleX(0.9382);">Average: 69.6</div>
<div class="t" style="left:251.30px;top:598.00px;font-size:11.5px;color:#3a3a3a;font-weight:normal;transform:scaleX(0.9829);">Count: 36</div>
<div class="t" style="left:316.40px;top:598.00px;font-size:11.5px;color:#3a3a3a;font-weight:normal;transform:scaleX(0.9244);">Sum: 1740</div>
<div class="r" style="left:386px;top:592.5px;width:40px;height:21.5px;background:#d2d2d2;"></div>
<svg class="r" style="left:397px;top:594px;" width="16" height="16" viewBox="0 0 16 16"><g fill="none" stroke="#6a6a6a" stroke-width="1"><rect x="1.5" y="1.5" width="13" height="13"/><path d="M5.8 1.5 V14.5 M10.2 1.5 V14.5 M1.5 5.8 H14.5 M1.5 10.2 H14.5"/></g></svg>
<svg class="r" style="left:438px;top:596px;" width="15" height="14" viewBox="0 0 15 14"><g fill="none" stroke="#6a6a6a" stroke-width="1"><rect x="0.5" y="0.5" width="13.5" height="12.5"/><rect x="3.5" y="2.5" width="7.5" height="8.5"/></g><g fill="#6a6a6a"><rect x="5" y="4.3" width="4.5" height="0.8"/><rect x="5" y="6.3" width="4.5" height="0.8"/><rect x="5" y="8.3" width="4.5" height="0.8"/></g></svg>
<svg class="r" style="left:477px;top:596px;" width="16" height="14" viewBox="0 0 16 14"><g fill="none" stroke="#6a6a6a" stroke-width="1"><rect x="0.5" y="0.5" width="14.5" height="12.5"/><path d="M5 0.5 V6.5 H10.5 V0.5"/></g></svg>
<div class="r" style="left:511.2px;top:601.5px;width:7px;height:1.1px;background:#555;"></div>
<div class="r" style="left:524.8px;top:601.6px;width:97px;height:1px;background:#777;"></div>
<div class="r" style="left:572px;top:597.2px;width:4.8px;height:11.6px;background:#666;"></div>
<svg class="r" style="left:626px;top:596px;" width="12" height="12" viewBox="0 0 12 12"><path d="M5.8 1 V11 M0.8 6 H10.8" stroke="#555" stroke-width="1.1"/></svg>
<div class="t" style="left:650.00px;top:598.00px;font-size:11.5px;color:#3a3a3a;font-weight:normal;transform:scaleX(0.8832);">100%</div>
</div>
<div class="win"></div>
</body></html>
